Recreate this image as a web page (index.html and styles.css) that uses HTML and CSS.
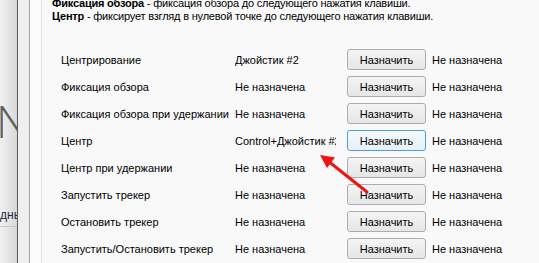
FILE: index.html
```html
<!DOCTYPE html>
<html>
<head>
    <meta charset="UTF-8">
    <title>Назначение клавиш</title>
    <link rel="stylesheet" href="styles.css">
</head>
<body>
    <div class="window">
        <div class="backdrop">
            <span class="big-letter">N</span>
            <div class="backdrop-tab">дные</div>
        </div>
        <div class="gutter"></div>
        <div class="sidebar"></div>
        <div class="panel">
            <div class="help">
                <p><b>Фиксация обзора</b> - фиксация обзора до следующего нажатия клавиши.</p>
                <p><b>Центр</b> - фиксирует взгляд в нулевой точке до следующего нажатия клавиши.</p>
            </div>

            <div class="binds">
                <div class="bind-row">
                    <span class="bind-name">Центрирование</span>
                    <span class="bind-key">Джойстик #2</span>
                    <button class="assign">Назначить</button>
                    <span class="bind-alt">Не назначена</span>
                </div>
                <div class="bind-row">
                    <span class="bind-name">Фиксация обзора</span>
                    <span class="bind-key">Не назначена</span>
                    <button class="assign">Назначить</button>
                    <span class="bind-alt">Не назначена</span>
                </div>
                <div class="bind-row">
                    <span class="bind-name">Фиксация обзора при удержании</span>
                    <span class="bind-key">Не назначена</span>
                    <button class="assign">Назначить</button>
                    <span class="bind-alt">Не назначена</span>
                </div>
                <div class="bind-row">
                    <span class="bind-name">Центр</span>
                    <span class="bind-key">Control+Джойстик #2</span>
                    <button class="assign focused">Назначить</button>
                    <span class="bind-alt">Не назначена</span>
                </div>
                <div class="bind-row">
                    <span class="bind-name">Центр при удержании</span>
                    <span class="bind-key">Не назначена</span>
                    <button class="assign">Назначить</button>
                    <span class="bind-alt">Не назначена</span>
                </div>
                <div class="bind-row">
                    <span class="bind-name">Запустить трекер</span>
                    <span class="bind-key">Не назначена</span>
                    <button class="assign">Назначить</button>
                    <span class="bind-alt">Не назначена</span>
                </div>
                <div class="bind-row">
                    <span class="bind-name">Остановить трекер</span>
                    <span class="bind-key">Не назначена</span>
                    <button class="assign">Назначить</button>
                    <span class="bind-alt">Не назначена</span>
                </div>
                <div class="bind-row">
                    <span class="bind-name">Запустить/Остановить трекер</span>
                    <span class="bind-key">Не назначена</span>
                    <button class="assign">Назначить</button>
                    <span class="bind-alt">Не назначена</span>
                </div>
            </div>
        </div>

        <!-- red annotation arrow pointing at the clipped key name -->
        <svg class="arrow" width="539" height="263" viewBox="0 0 539 263">
            <line x1="367" y1="192" x2="328" y2="161" stroke="#f01414" stroke-width="3" stroke-linecap="round"/>
            <polygon points="320,155 335,157.5 327,168" fill="#f01414"/>
        </svg>
    </div>
</body>
</html>
```

FILE: styles.css
```css
body {
    margin: 0;
    font-family: "Liberation Sans", Arial, sans-serif;
    font-size: 11px;
    color: #000;
    overflow: hidden;
}
.window {
    position: relative;
    display: flex;
    width: 539px;
    height: 263px;
    overflow: hidden;
    background-color: #f9f9f9;
}
.backdrop {
    width: 17px;
    flex-shrink: 0;
    display: flex;
    flex-direction: column;
    overflow: hidden;
    background: linear-gradient(to right, #f1f1f1, #d8d8d8);
    border-right: 1px solid #5c5c5c;
}
.big-letter {
    margin-top: 98px;
    margin-left: -4px;
    font-family: "Open Sans", sans-serif;
    font-weight: 300;
    font-size: 45px;
    line-height: 46px;
    color: #5e5e5e;
}
.backdrop-tab {
    margin-top: 64px;
    padding-bottom: 4px;
    white-space: nowrap;
    font-size: 12px;
    color: #1b2a4a;
    border-bottom: 1px solid #c8c8c8;
}
.gutter {
    width: 11px;
    flex-shrink: 0;
    background-color: #efefef;
    border-right: 1px solid #a3a3a3;
}
.sidebar {
    width: 11px;
    flex-shrink: 0;
    background-color: #fcfcfc;
    border-right: 1px solid #e4e4e4;
}
.panel {
    flex: 1;
    padding-left: 10px;
}
.help {
    margin-top: -3px;
    letter-spacing: -0.2px;
}
.help p {
    margin: 0;
    line-height: 13px;
    white-space: nowrap;
}
.binds {
    margin-top: 23px;
    padding-left: 9px;
}
.bind-row {
    display: flex;
    align-items: center;
    height: 27px;
    white-space: nowrap;
}
.bind-name {
    width: 174px;
}
.bind-key {
    width: 101px;
    overflow: hidden;
    margin-right: 11px;
}
.assign {
    width: 79px;
    height: 21px;
    margin: 0 6px 0 0;
    padding: 0;
    font-family: inherit;
    font-size: 11px;
    color: #000;
    border: 1px solid #acacac;
    border-radius: 3px;
    background: linear-gradient(#f4f4f4, #e6e6e6);
}
.assign.focused {
    border-color: #4a9fe0;
    background: linear-gradient(#f4f9fd, #e8f1f9);
}
.arrow {
    position: absolute;
    left: 0;
    top: 0;
}
```
